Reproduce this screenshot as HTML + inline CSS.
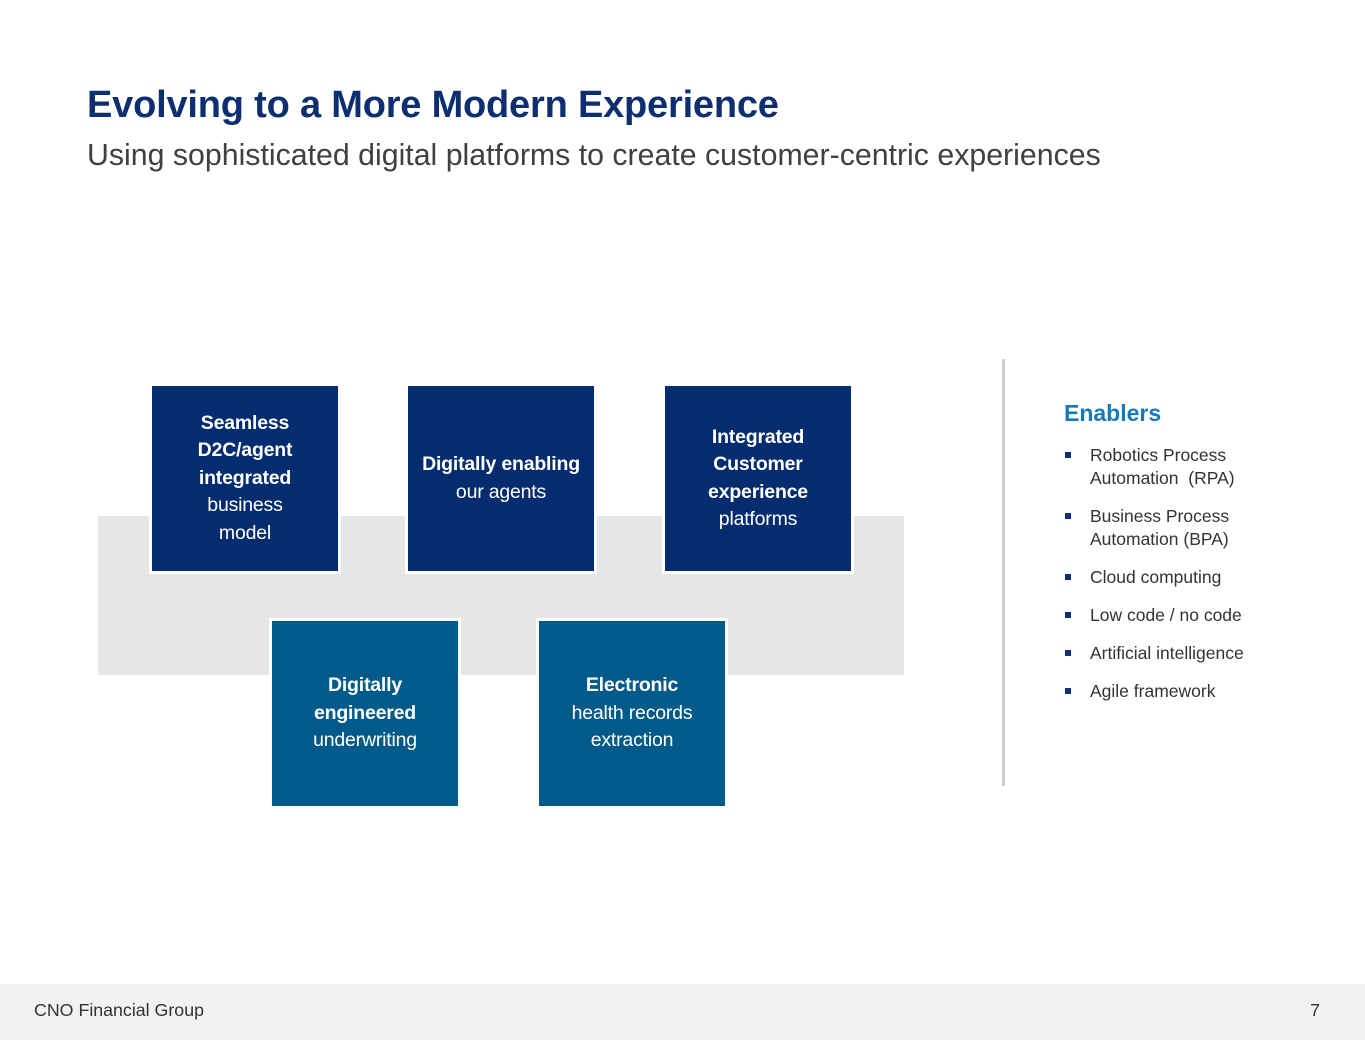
<!DOCTYPE html>
<html><head><meta charset="utf-8"><style>
*{margin:0;padding:0;box-sizing:border-box}
body{width:1365px;height:1055px;background:#fff;position:relative;overflow:hidden;font-family:"Liberation Sans",sans-serif}
.t{position:absolute;left:87px;top:84px;font-size:38px;font-weight:bold;color:#0d2f72;white-space:nowrap;letter-spacing:-0.2px}
.s{position:absolute;left:87px;top:139px;font-size:30.3px;color:#404040;white-space:nowrap}
.band{position:absolute;left:98px;top:516px;width:806px;height:159px;background:#e6e6e6}
.b{position:absolute;width:192px;height:191px;border:3px solid #fff;background:#042c6f;color:#fff;display:flex;align-items:center;justify-content:center;text-align:center;font-size:19.5px;line-height:27.5px;letter-spacing:-0.2px}
.b.t2{background:#005a8a}
.b b{font-weight:bold}
.vl{position:absolute;left:1002px;top:359px;width:3px;height:427px;background:#cccccc}
.en{position:absolute;left:1064px;top:400px;font-size:23px;font-weight:bold;color:#1479b8}
ul{position:absolute;left:1064px;top:444px;list-style:none;font-size:17.5px;color:#333;line-height:23px}
li{position:relative;padding-left:26px;margin-bottom:15px;white-space:nowrap}
li:before{content:"";position:absolute;left:1px;top:8px;width:6px;height:6px;background:#0d2f72}
.f{position:absolute;left:0;top:984px;width:1365px;height:56px;background:#f2f2f2}
.fl{position:absolute;left:34px;top:1000px;font-size:17.8px;color:#333}
.fr{position:absolute;right:45px;top:1000px;font-size:17.8px;color:#333}
</style></head><body>
<div class="t">Evolving to a More Modern Experience</div>
<div class="s">Using sophisticated digital platforms to create customer-centric experiences</div>
<div class="band"></div>
<div class="b" style="left:149px;top:383px"><div><b>Seamless<br>D2C/agent<br>integrated</b><br>business<br>model</div></div>
<div class="b" style="left:405px;top:383px"><div><b>Digitally enabling</b><br>our agents</div></div>
<div class="b" style="left:662px;top:383px"><div><b>Integrated<br>Customer<br>experience</b><br>platforms</div></div>
<div class="b t2" style="left:269px;top:618px"><div><b>Digitally<br>engineered</b><br>underwriting</div></div>
<div class="b t2" style="left:536px;top:618px"><div><b>Electronic</b><br>health records<br>extraction</div></div>
<div class="vl"></div>
<div class="en">Enablers</div>
<ul>
<li>Robotics Process<br>Automation&nbsp; (RPA)</li>
<li>Business Process<br>Automation (BPA)</li>
<li>Cloud computing</li>
<li>Low code / no code</li>
<li>Artificial intelligence</li>
<li>Agile framework</li>
</ul>
<div class="f"></div>
<div class="fl">CNO Financial Group</div>
<div class="fr">7</div>
</body></html>
